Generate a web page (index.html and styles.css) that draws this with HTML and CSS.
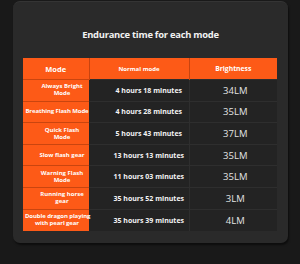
FILE: index.html
```html
<!DOCTYPE html>
<html>
<head>
<meta charset="utf-8">
<link rel="stylesheet" href="styles.css">
</head>
<body>
<div class="card">
  <h1 class="title">Endurance time for each mode</h1>
  <table class="table">
    <colgroup>
      <col class="col-mode">
      <col class="col-normal">
      <col class="col-bright">
    </colgroup>
    <tr class="head">
      <th class="c-mode">Mode</th>
      <th class="c-normal">Normal mode</th>
      <th class="c-bright">Brightness</th>
    </tr>
    <tr>
      <td class="mode">Always Bright<br>Mode</td>
      <td class="time">4 hours 18 minutes</td>
      <td class="lm">34LM</td>
    </tr>
    <tr>
      <td class="mode wide">Breathing Flash Mode</td>
      <td class="time">4 hours 28 minutes</td>
      <td class="lm">35LM</td>
    </tr>
    <tr>
      <td class="mode">Quick Flash<br>Mode</td>
      <td class="time">5 hours 43 minutes</td>
      <td class="lm">37LM</td>
    </tr>
    <tr>
      <td class="mode">Slow flash gear</td>
      <td class="time">13 hours 13 minutes</td>
      <td class="lm">35LM</td>
    </tr>
    <tr>
      <td class="mode">Warning Flash<br>Mode</td>
      <td class="time">11 hours 03 minutes</td>
      <td class="lm">35LM</td>
    </tr>
    <tr>
      <td class="mode">Running horse<br>gear</td>
      <td class="time">35 hours 52 minutes</td>
      <td class="lm">3LM</td>
    </tr>
    <tr>
      <td class="mode wide">Double dragon playing<br>with pearl gear</td>
      <td class="time">35 hours 39 minutes</td>
      <td class="lm">4LM</td>
    </tr>
  </table>
</div>
</body>
</html>
```
FILE: styles.css
```css
html, body {
  margin: 0;
  padding: 0;
  background: #191919;
  width: 300px;
  height: 264px;
  overflow: hidden;
  font-family: "Open Sans", "Noto Sans", sans-serif;
}
.card {
  box-sizing: border-box;
  margin: 1px 0 0 13px;
  width: 275px;
  height: 242px;
  padding: 26px 10px 0 10px;
  background: #2a2a2a;
  border-radius: 7px;
  box-shadow: 1px 2px 2px rgba(0,0,0,0.5);
  border-top: 1px solid #343434;
}
.title {
  margin: 0;
  font-size: 9.4px;
  letter-spacing: -0.25px;
  line-height: 14px;
  font-weight: 700;
  color: #f2f2f2;
  text-align: center;
}
.table {
  margin-top: 16px;
  width: 254px;
  border-collapse: collapse;
  table-layout: fixed;
}
.col-mode { width: 66px; }
.col-normal { width: 100px; }
.col-bright { width: 88px; }
.table tr {
  height: 21.6px;
}
.table th {
  background: #fd5a17;
  color: #fff;
  font-weight: 700;
  padding: 0;
  border-left: 1px solid #c8440f;
}
.table th:first-child { border-left: none; }
.c-mode { font-size: 7.5px; padding-left: 4px; }
.c-normal { font-size: 6px; }
.c-bright { font-size: 6.8px; padding-left: 18px; }
.mode {
  background: #fd5a17;
  color: #fff;
  font-weight: 700;
  font-size: 6px;
  line-height: 7px;
  text-align: center;
  padding: 0 0 0 12px;
  border-top: 1px solid #c9450f;
  white-space: nowrap;
}
.mode.wide { padding-left: 2px; letter-spacing: -0.1px; }
.time {
  background: #232323;
  color: #f4f4f4;
  font-weight: 700;
  font-size: 7px;
  text-align: center;
  padding: 0 0 0 20px;
  border-top: 1px solid #2e2e2e;
  border-right: 1px solid #2e2e2e;
}
.lm {
  background: #232323;
  color: #e4e4e4;
  font-weight: 400;
  font-size: 9.5px;
  text-align: center;
  padding: 0 0 0 4px;
  border-top: 1px solid #2e2e2e;
}
```
